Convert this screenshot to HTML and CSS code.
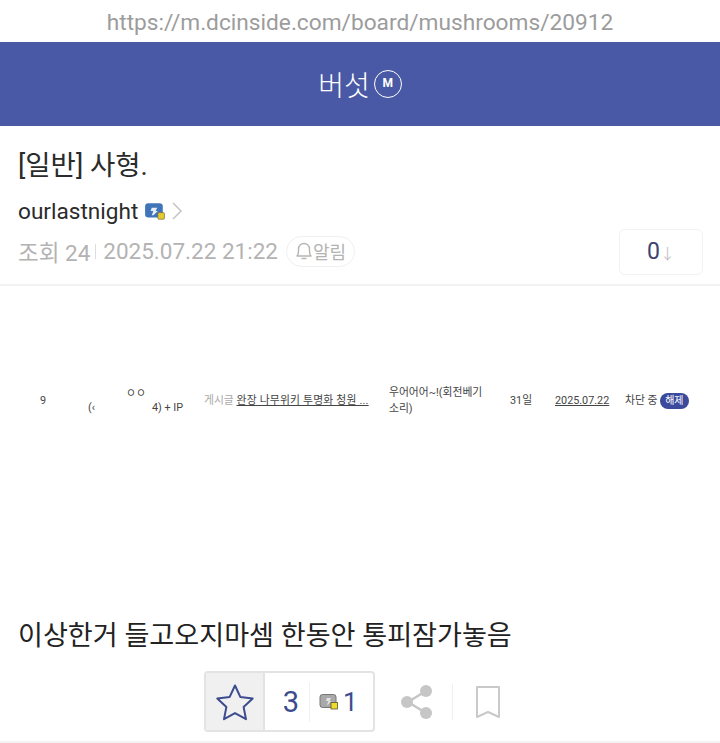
FILE: index.html
```html
<!DOCTYPE html>
<html lang="ko">
  <head>
    <meta charset="UTF-8" />
    <meta name="viewport" content="width=device-width, initial-scale=1.0" />
    <title>버섯</title>
    <link rel="stylesheet" href="styles.css">
  </head>
  <body>
    <div class="url-bar">https://m.dcinside.com/board/mushrooms/20912</div>

    <header class="gall-header">
      <span class="gall-name">버섯</span>
      <span class="minor-mark">M</span>
    </header>

    <section class="post-head">
      <h1 class="post-title">[일반] 사형.</h1>
      <div class="writer">
        <span>ourlastnight</span>
        <svg class="gonic" width="21" height="19" viewBox="0 0 19 17">
          <rect x="1" y="1" width="16" height="13" rx="3" fill="#3f74b8" />
          <path d="M7 12l1.500-4h-2.500l1-3h5l-1.500 3h2l-4 4z" fill="#e8eef8" />
          <rect x="12.500" y="9.500" width="6" height="6" rx="1" fill="#e6c92e" stroke="#6b6a3a" stroke-width="0.600" />
        </svg>
        <svg class="chevron" width="12" height="20" viewBox="0 0 12 20">
          <path d="M2 2l8 8-8 8" fill="none" stroke="#c4c4c4" stroke-width="1.500" />
        </svg>
      </div>
      <div class="meta-row">
        <div class="meta">
          <span>조회 24</span>
          <i class="meta-sep"></i>
          <span>2025.07.22 21:22</span>
          <span class="alarm">
            <svg width="18" height="20" viewBox="0 0 18 20">
              <path d="M2 15c1-1 1.500-2 1.500-5V8a5.500 5.500 0 0 1 11 0v2c0 3 .5 4 1.500 5z" fill="none" stroke="#b5b5b5" stroke-width="1.400" stroke-linejoin="round" />
              <path d="M6.500 17.500h5" stroke="#b5b5b5" stroke-width="1.400" />
            </svg>알림
          </span>
        </div>
        <div class="comment-box">0<span class="down">↓</span></div>
      </div>
    </section>

    <section class="post-body">
      <div class="capture">
        <div class="cell-no">9</div>
        <div class="cell-writer">
          <div class="writer-top">ㅇㅇ</div>
          <div class="writer-bottom"><span>(‹</span><span>4) + IP</span></div>
        </div>
        <div class="cell-post"><span class="post-label">게시글</span> <u>완장 나무위키 투명화 청원 ...</u></div>
        <div class="cell-reason">우어어어~!(회전베기 소리)</div>
        <div class="cell-days">31일</div>
        <div class="cell-date"><u>2025.07.22</u></div>
        <div class="cell-status">차단 중 <span class="release">해제</span></div>
      </div>
      <p class="post-text">이상한거 들고오지마셈 한동안 통피잠가놓음</p>
    </section>

    <div class="actions">
      <div class="reco">
        <div class="reco-star">
          <svg width="40" height="38" viewBox="0 0 40 38">
            <path d="M20 2.500l5.300 11.400 12.400 1.500-9.100 8.500 2.400 12.300L20 30.100 9 36.200l2.400-12.300-9.100-8.500 12.400-1.500z" fill="none" stroke="#3d4b8f" stroke-width="2" stroke-linejoin="round" />
          </svg>
        </div>
        <div class="reco-count">3</div>
        <i class="reco-sep"></i>
        <div class="reco-fix">
          <svg width="20" height="18" viewBox="0 0 20 18">
            <rect x="1" y="1.500" width="16" height="13" rx="2.500" fill="#a9a9a9" stroke="#777" />
            <path d="M8 12l1.500-4H7l1-3h4l-1.500 3h2l-4 4z" fill="#e4e4e4" />
            <rect x="12" y="9.500" width="6.500" height="6.500" fill="#efdc2a" stroke="#55552a" stroke-width="0.800" />
          </svg>
          <span>1</span>
        </div>
      </div>
      <svg class="share" width="34" height="36" viewBox="0 0 34 36">
        <path d="M26 7L8 18l18 11" fill="none" stroke="#c6c6c6" stroke-width="2.500" />
        <circle cx="26" cy="7" r="6" fill="#c6c6c6" />
        <circle cx="7" cy="18" r="6" fill="#c6c6c6" />
        <circle cx="26" cy="29" r="6" fill="#c6c6c6" />
      </svg>
      <i class="action-sep"></i>
      <svg class="bookmark" width="26" height="34" viewBox="0 0 26 34">
        <path d="M2 2h22v30l-11-5-11 5z" fill="none" stroke="#c9c9c9" stroke-width="2" stroke-linejoin="round" />
      </svg>
    </div>
  </body>
</html>
```

FILE: styles.css
```css
body {
  margin: 0;
  background-color: #fff;
  color: #2b2b2b;
  font-family: "Roboto", "Noto Sans CJK KR", sans-serif;
}
.url-bar {
  height: 42px;
  line-height: 45px;
  text-align: center;
  font-size: 22.700px;
  color: #9c9c9c;
}
.gall-header {
  height: 84px;
  background-color: #4a59a5;
  color: #fff;
  display: flex;
  align-items: center;
  justify-content: center;
  gap: 4px;
}
.gall-name {
  font-size: 28px;
  font-weight: 300;
}
.minor-mark {
  width: 28px;
  height: 28px;
  box-sizing: border-box;
  border: 1.500px solid #fff;
  border-radius: 50%;
  font-size: 12px;
  font-weight: 700;
  line-height: 25px;
  text-align: center;
}
.post-head {
  height: 160px;
  box-sizing: border-box;
  padding: 21px 17px 0 18px;
  border-bottom: 2px solid #f3f3f3;
}
.post-title {
  margin: 0;
  font-size: 27.500px;
  font-weight: 400;
  line-height: 38px;
}
.writer {
  display: flex;
  align-items: center;
  margin-top: 11px;
  height: 30px;
  font-size: 22.600px;
}
.gonic {
  margin-left: 6px;
}
.chevron {
  margin-left: 6px;
}
.meta-row {
  display: flex;
  justify-content: space-between;
  align-items: center;
  margin-top: 3px;
}
.meta {
  display: flex;
  align-items: center;
  margin-bottom: 2px;
  font-size: 22.500px;
  color: #b3b3b3;
}
.meta-sep {
  width: 1px;
  height: 15px;
  margin: 0 7px 0 5px;
  background-color: #ddd;
}
.alarm {
  display: flex;
  align-items: center;
  height: 29px;
  margin-left: 8px;
  padding: 0 8px;
  border: 1px solid #f0f0f0;
  border-radius: 16px;
  font-size: 18px;
}
.comment-box {
  width: 84px;
  height: 46px;
  box-sizing: border-box;
  border: 1px solid #f2f2f2;
  border-radius: 6px;
  font-size: 23px;
  line-height: 44px;
  text-align: center;
  color: #3d4270;
}
.down {
  font-size: 15px;
  color: #c4c4c4;
}
.post-body {
  height: 383px;
  box-sizing: border-box;
  padding-top: 93px;
}
.capture {
  display: grid;
  grid-template-columns: 48px 95px 21px 168px 17px 96px 25px 45px 54px 16px auto;
  align-items: center;
  height: 44px;
  padding-left: 40px;
  font-size: 10.800px;
  line-height: 16px;
  color: #444;
}
.cell-no { grid-column: 1; }
.cell-writer { grid-column: 2; }
.cell-post { grid-column: 4; white-space: nowrap; }
.cell-reason { grid-column: 6; }
.cell-days { grid-column: 8; }
.cell-date { grid-column: 9; }
.cell-status { grid-column: 11; white-space: nowrap; }
.writer-top {
  padding-left: 38px;
  margin-bottom: -2px;
}
.writer-bottom {
  display: flex;
  justify-content: space-between;
}
.post-label {
  color: #aaa;
}
.cell-post u {
  letter-spacing: 0.200px;
}
.release {
  display: inline-block;
  padding: 0 5px;
  border-radius: 8px;
  background-color: #3b4a9a;
  color: #fff;
  font-size: 10px;
}
.post-text {
  margin: 194px 0 0 18px;
  font-size: 27.100px;
  line-height: 38px;
  color: #222;
}
.actions {
  display: flex;
  align-items: center;
  justify-content: center;
  height: 74px;
  box-sizing: border-box;
  padding: 2px 15px 9px 0;
  border-bottom: 2px solid #f3f3f3;
}
.reco {
  display: flex;
  align-items: center;
  width: 171px;
  height: 61px;
  box-sizing: border-box;
  border: 2px solid #e3e3e3;
  border-radius: 4px;
  color: #3d4b8f;
  font-size: 29px;
}
.reco-star {
  display: flex;
  align-items: center;
  justify-content: center;
  width: 57px;
  height: 100%;
  background-color: #f0f0f0;
  border-right: 2px solid #e3e3e3;
}
.reco-count {
  width: 36px;
  padding-left: 8px;
  text-align: center;
}
.reco-sep {
  width: 1px;
  height: 40px;
  background-color: #f2f2f2;
}
.reco-fix {
  display: flex;
  align-items: center;
  gap: 4px;
  padding-left: 9px;
  font-size: 26px;
}
.share {
  margin-left: 25px;
}
.action-sep {
  width: 1px;
  height: 36px;
  margin: 0 22px 0 18px;
  background-color: #f0f0f0;
}
```
